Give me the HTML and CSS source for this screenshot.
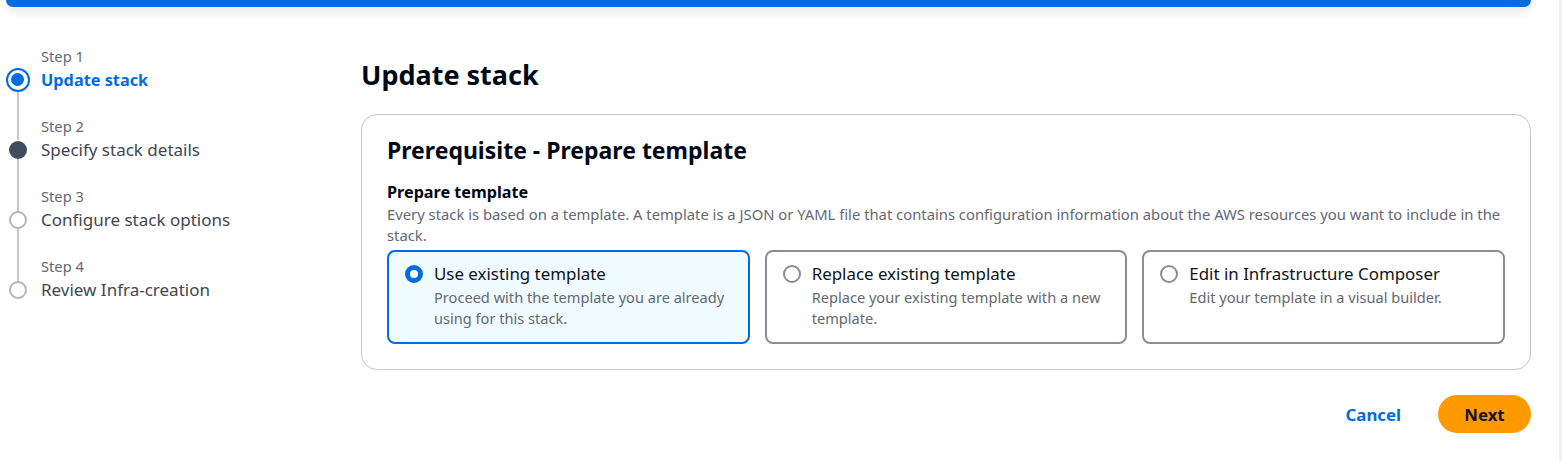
FILE: index.html
```html
<!DOCTYPE html>
<html lang="en">
<head>
<meta charset="utf-8">
<title>Update stack</title>
<link rel="stylesheet" href="styles.css">
</head>
<body>
<div class="topbar"></div>
<div class="scrolltrack"></div>
<div class="layout">
  <nav class="steps">
    <div class="step step-active">
      <span class="step-label">Step 1</span>
      <span class="step-marker"></span>
      <span class="step-title">Update stack</span>
    </div>
    <div class="step step-done">
      <span class="step-label">Step 2</span>
      <span class="step-marker"></span>
      <span class="step-title">Specify stack details</span>
    </div>
    <div class="step step-todo">
      <span class="step-label">Step 3</span>
      <span class="step-marker"></span>
      <span class="step-title">Configure stack options</span>
    </div>
    <div class="step step-todo step-last">
      <span class="step-label">Step 4</span>
      <span class="step-marker"></span>
      <span class="step-title">Review Infra-creation</span>
    </div>
  </nav>
  <main class="main">
    <h1 class="page-title">Update stack</h1>
    <section class="container">
      <h2 class="container-title">Prerequisite - Prepare template</h2>
      <div class="field-label">Prepare template</div>
      <p class="field-desc">Every stack is based on a template. A template is a JSON or YAML file that contains configuration information about the AWS resources you want to include in the stack.</p>
      <div class="tiles">
        <div class="tile tile-selected">
          <span class="radio radio-on"></span>
          <div class="tile-text">
            <div class="tile-title">Use existing template</div>
            <div class="tile-desc">Proceed with the template you are already using for this stack.</div>
          </div>
        </div>
        <div class="tile">
          <span class="radio"></span>
          <div class="tile-text">
            <div class="tile-title">Replace existing template</div>
            <div class="tile-desc">Replace your existing template with a new template.</div>
          </div>
        </div>
        <div class="tile">
          <span class="radio"></span>
          <div class="tile-text">
            <div class="tile-title">Edit in Infrastructure Composer</div>
            <div class="tile-desc">Edit your template in a visual builder.</div>
          </div>
        </div>
      </div>
    </section>
    <div class="actions">
      <button class="btn-link">Cancel</button>
      <button class="btn-primary">Next</button>
    </div>
  </main>
</div>
</body>
</html>
```

FILE: styles.css
```css
* { box-sizing: border-box; }
html, body { margin: 0; padding: 0; background: #ffffff; }
body {
  font-family: "Noto Sans", "Open Sans", Arial, sans-serif;
  color: #0f141a;
  font-size: 14px;
  overflow: hidden;
  height: 461px;
  position: relative;
}
.topbar {
  height: 7px;
  margin: 0 31px 0 6px;
  background: #006ce0;
  border-radius: 0 0 12px 12px;
  box-shadow: 0 4px 10px rgba(0, 7, 22, 0.12);
}
.scrolltrack {
  position: absolute;
  top: 0;
  right: 0;
  width: 3px;
  height: 100%;
  background: #f1f1f1;
}
.layout {
  display: flex;
  align-items: flex-start;
}
.steps {
  width: 361px;
  flex: none;
  padding: 39px 0 0 6px;
  display: flex;
  flex-direction: column;
  gap: 24px;
}
.step {
  display: grid;
  grid-template-columns: 24px 1fr;
  column-gap: 11px;
  row-gap: 2px;
  grid-template-rows: 20px 24px;
  align-items: center;
}
.step-label {
  grid-column: 2;
  grid-row: 1;
  font-size: 14.7px;
  line-height: 20px;
  color: #656871;
}
.step-title {
  grid-column: 2;
  grid-row: 2;
  font-size: 17px;
  line-height: 24px;
  color: #424650;
}
.step-marker {
  grid-column: 1;
  grid-row: 2;
  justify-self: center;
  position: relative;
  border-radius: 50%;
}
.step-marker::after {
  content: "";
  position: absolute;
  left: 50%;
  margin-left: -1px;
  width: 2px;
  background: #c6c6cd;
}
.step-last .step-marker::after { display: none; }
.step-active .step-marker {
  width: 24px;
  height: 24px;
  border: 2.5px solid #006ce0;
  background: #ffffff;
}
.step-active .step-marker::before {
  content: "";
  position: absolute;
  left: 3px;
  top: 3px;
  width: 13px;
  height: 13px;
  border-radius: 50%;
  background: #006ce0;
}
.step-active .step-marker::after {
  top: 22px;
  height: 48px;
}
.step-active .step-title {
  color: #006ce0;
  font-weight: 700;
  font-size: 16.3px;
}
.step-done .step-marker {
  width: 18px;
  height: 18px;
  background: #414d5c;
}
.step-done .step-marker::after {
  top: 18px;
  height: 53px;
}
.step-todo .step-marker {
  width: 18px;
  height: 18px;
  border: 2px solid #b4b4bb;
  background: #ffffff;
}
.step-todo .step-marker::after {
  top: 16px;
  height: 53px;
}
.main {
  flex: 1;
  margin-right: 31px;
  padding-top: 53px;
}
.page-title {
  margin: 0;
  font-size: 27px;
  line-height: 30px;
  font-weight: 700;
  color: #000716;
}
.container {
  margin-top: 24px;
  border: 1px solid #c6c6cd;
  border-radius: 16px;
  padding: 21px 25px 25px 25px;
}
.container-title {
  margin: 0;
  font-size: 23px;
  line-height: 28px;
  font-weight: 700;
  color: #000716;
}
.field-label {
  margin-top: 18px;
  font-size: 16.2px;
  line-height: 20px;
  font-weight: 700;
  color: #000716;
}
.field-desc {
  margin: 2px 0 0 0;
  font-size: 14.8px;
  line-height: 21px;
  color: #656871;
}
.tiles {
  margin-top: 4px;
  display: grid;
  grid-template-columns: repeat(3, 1fr);
  gap: 15px;
}
.tile {
  display: grid;
  grid-template-columns: 18px 1fr;
  column-gap: 11px;
  align-items: start;
  border: 2px solid #8c8c94;
  border-radius: 8px;
  padding: 10px 16px 12px 16px;
  min-height: 94px;
}
.tile-selected {
  border-color: #006ce0;
  background: #f0fbff;
}
.radio {
  width: 18px;
  height: 18px;
  margin-top: 3px;
  border-radius: 50%;
  border: 2px solid #8c8c94;
  background: #ffffff;
}
.radio-on {
  border: 5.5px solid #006ce0;
}
.tile-title {
  font-size: 16.9px;
  line-height: 24px;
  color: #0f141a;
}
.tile-desc {
  margin-top: 1px;
  font-size: 14.6px;
  line-height: 21px;
  color: #656871;
}
.actions {
  margin-top: 25px;
  display: flex;
  justify-content: flex-end;
  align-items: center;
  gap: 37px;
}
.btn-link {
  border: none;
  background: none;
  padding: 0;
  font-family: inherit;
  font-size: 16.8px;
  font-weight: 700;
  color: #006ce0;
  cursor: pointer;
}
.btn-primary {
  border: none;
  background: #ff9900;
  border-radius: 20px;
  width: 93px;
  height: 38px;
  font-family: inherit;
  font-size: 16.8px;
  font-weight: 700;
  color: #0f141a;
  cursor: pointer;
}
```
